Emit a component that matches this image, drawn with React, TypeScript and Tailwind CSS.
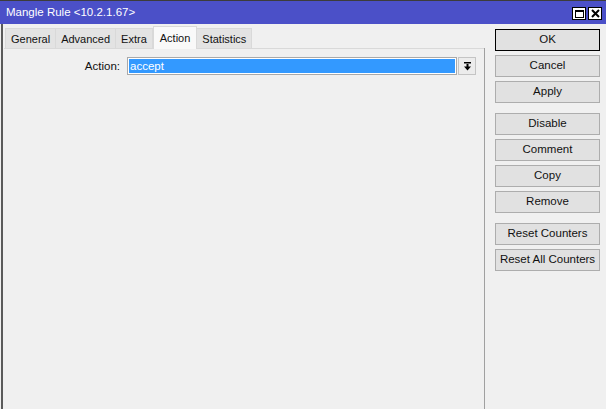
import React from 'react'

const font = { fontFamily: '"Liberation Sans", Arial, sans-serif' }

const tabs = ['General', 'Advanced', 'Extra', 'Action', 'Statistics']

const groups: string[][] = [
  ['OK', 'Cancel', 'Apply'],
  ['Disable', 'Comment', 'Copy', 'Remove'],
  ['Reset Counters', 'Reset All Counters'],
]

function WinButton({ kind }: { kind: 'max' | 'close' }) {
  return (
    <div className="w-[14px] h-[13px] bg-white border border-black flex items-center justify-center">
      {kind === 'max' ? (
        <div className="w-[9px] h-[8px] border border-black border-t-2" />
      ) : (
        <svg width="9" height="9" viewBox="0 0 9 9">
          <path d="M1 1 L8 8 M8 1 L1 8" stroke="#000" strokeWidth="2" />
        </svg>
      )}
    </div>
  )
}

function SideButton({ label, focused }: { label: string; focused?: boolean }) {
  return (
    <div
      className={`w-[105px] h-[22px] flex items-center justify-center text-[11.5px] text-[#111] bg-[#e1e1e1] border ${
        focused ? 'border-black' : 'border-[#adadad]'
      }`}
    >
      {label}
    </div>
  )
}

export default function App() {
  return (
    <div className="w-[606px] h-[409px] bg-[#f0f0f0] flex flex-col overflow-hidden border-t border-[#3c3c3c]" style={font}>
      <div className="h-[23px] bg-[#4b50c8] flex items-center justify-between pl-[6px] pr-[4px]">
        <span className="text-white text-[11.5px] mt-[1px]">Mangle Rule &lt;10.2.1.67&gt;</span>
        <div className="flex gap-[2px] mt-[2px]">
          <WinButton kind="max" />
          <WinButton kind="close" />
        </div>
      </div>

      <div className="flex flex-1 border-l-2 border-[#5a5a5a] ml-[1px]">
        <div className="w-[481px] flex flex-col">
          <div className="h-[24px] flex items-end pl-[2px]">
            {tabs.map((t) =>
              t === 'Action' ? (
                <div
                  key={t}
                  className="h-[23px] px-[6px] flex items-center text-[11px] text-[#111] bg-[#f9f9f9] border border-b-0 border-[#d9d9d9] -mb-px relative z-10"
                >
                  {t}
                </div>
              ) : (
                <div
                  key={t}
                  className="h-[20px] px-[5px] pt-[2px] flex items-center text-[11px] text-[#111] bg-[#e3e3e3] border border-b-0 border-[#d9d9d9] -ml-px first:ml-0"
                >
                  {t}
                </div>
              ),
            )}
          </div>
          <div className="flex-1 border-t border-[#d9d9d9] ml-[1px]">
            <div className="flex items-center mt-[8px]">
              <span className="w-[117px] text-right text-[11.5px] text-[#111] pr-[1px] mt-[1px]">Action:</span>
              <div className="ml-[6px] w-[330px] h-[18px] border border-[#a9a9a9] p-px bg-white">
                <div className="h-full bg-[#3399ff] text-white text-[11.5px] leading-[14px] pl-[1px]">accept</div>
              </div>
              <div className="ml-[1px] w-[18px] h-[18px] border border-[#c4c4c4] bg-[#ececec] flex items-center justify-center">
                <svg width="9" height="9" viewBox="0 0 9 9">
                  <rect x="1" y="0" width="7" height="1.5" fill="#000" />
                  <rect x="3.5" y="2" width="2" height="3" fill="#000" />
                  <path d="M1 4.5 L8 4.5 L4.5 8.5 Z" fill="#000" />
                </svg>
              </div>
            </div>
          </div>
        </div>

        <div className="w-px bg-[#a0a0a0] mt-[24px]" />

        <div className="flex flex-col pt-[5px] pl-[10px] gap-[10px]">
          {groups.map((g, i) => (
            <div key={i} className="flex flex-col gap-[4px]">
              {g.map((b) => (
                <SideButton key={b} label={b} focused={b === 'OK'} />
              ))}
            </div>
          ))}
        </div>
      </div>
    </div>
  )
}
